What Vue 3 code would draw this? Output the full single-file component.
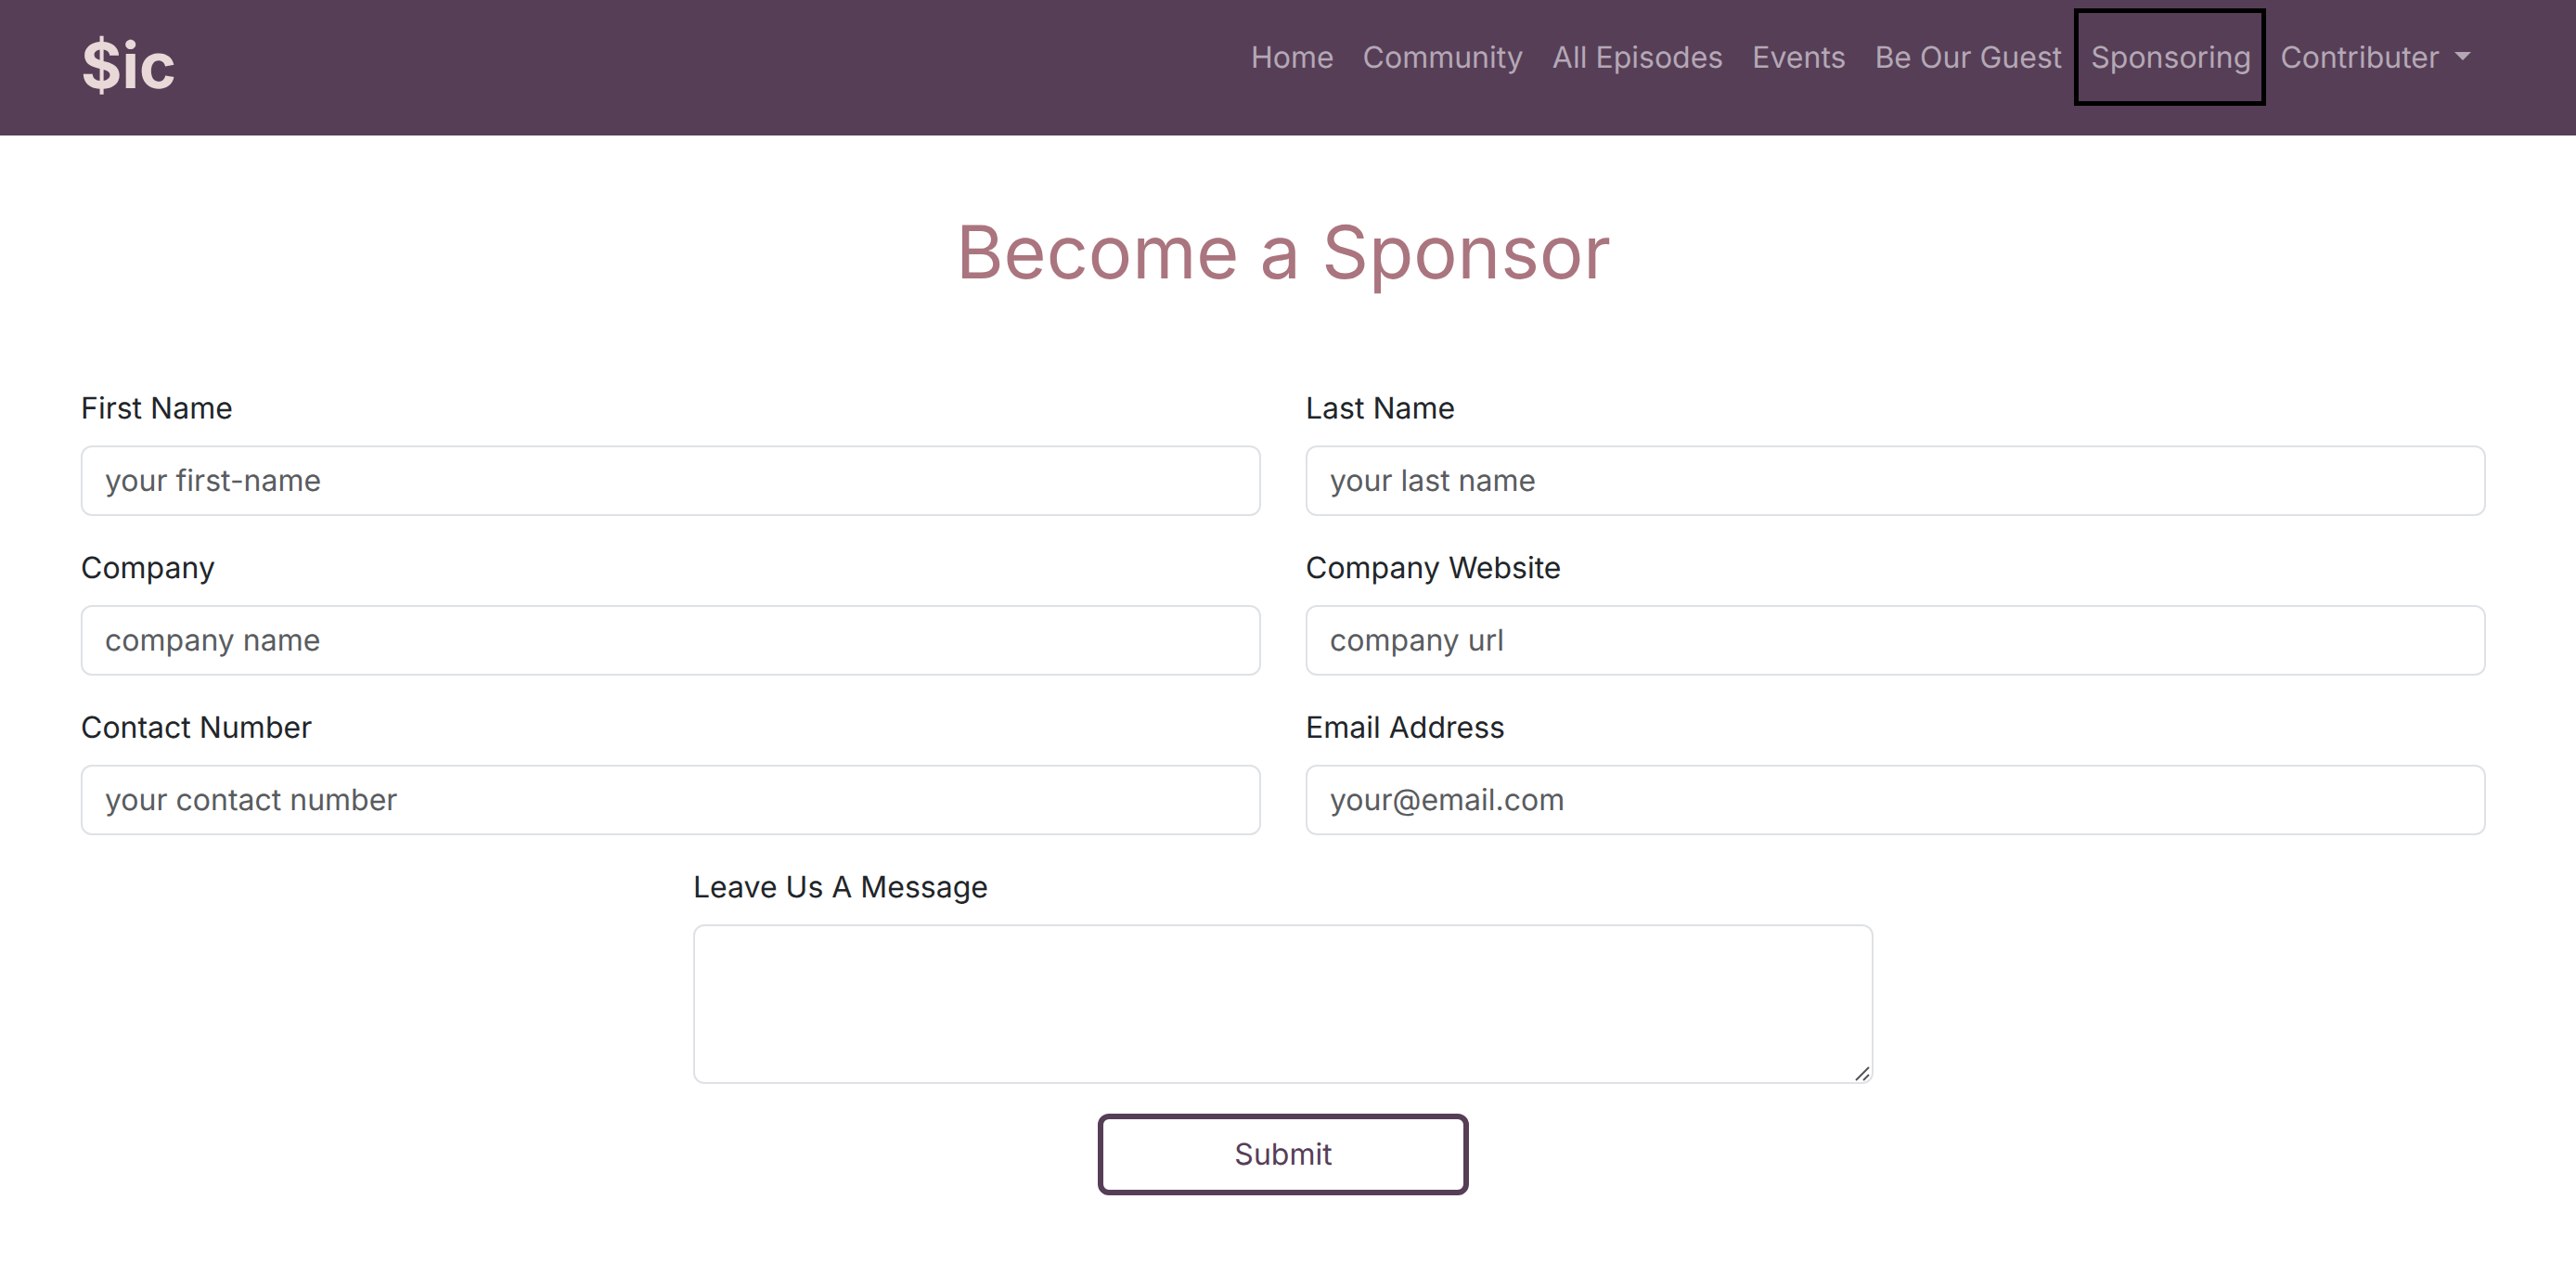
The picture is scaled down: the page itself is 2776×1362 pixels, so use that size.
<script setup>
import { reactive } from 'vue'

const links = [
  { label: 'Home', href: '#home' },
  { label: 'Community', href: '#community' },
  { label: 'All Episodes', href: '#episodes' },
  { label: 'Events', href: '#events' },
  { label: 'Be Our Guest', href: '#guest' },
  { label: 'Sponsoring', href: '#sponsoring', current: true },
  { label: 'Contributer', href: '#contributer', menu: true },
]

const fields = [
  { id: 'first-name', label: 'First Name', type: 'text', placeholder: 'your first-name' },
  { id: 'last-name', label: 'Last Name', type: 'text', placeholder: 'your last name' },
  { id: 'company', label: 'Company', type: 'text', placeholder: 'company name' },
  { id: 'website', label: 'Company Website', type: 'text', placeholder: 'company url' },
  { id: 'phone', label: 'Contact Number', type: 'tel', placeholder: 'your contact number' },
  { id: 'email', label: 'Email Address', type: 'email', placeholder: 'your@email.com' },
]

const form = reactive({ message: '' })
</script>

<template>
  <div class="page">
    <header class="navbar">
      <a class="brand" href="#home">$ic</a>
      <nav class="links" aria-label="Main">
        <a
          v-for="link in links"
          :key="link.label"
          class="link"
          :class="{ current: link.current, menu: link.menu }"
          :href="link.href"
        >{{ link.label }}</a>
      </nav>
    </header>

    <main class="content">
      <h1 class="title">Become a Sponsor</h1>
      <form class="form" @submit.prevent>
        <div class="grid">
          <div v-for="field in fields" :key="field.id" class="field">
            <label class="label" :for="field.id">{{ field.label }}</label>
            <input
              :id="field.id"
              v-model="form[field.id]"
              class="control"
              :type="field.type"
              :placeholder="field.placeholder"
            >
          </div>
        </div>
        <div class="field message">
          <label class="label" for="message">Leave Us A Message</label>
          <div class="area">
            <textarea id="message" v-model="form.message" class="control" rows="3"></textarea>
            <svg class="grip" viewBox="0 0 18 18" aria-hidden="true">
              <path d="M2 16 16 2M10 16l6-6" />
            </svg>
          </div>
        </div>
        <button class="submit" type="submit">Submit</button>
      </form>
    </main>
  </div>
</template>

<style>
body {
  margin: 0;
  background: #fff;
}
</style>

<style scoped>
.page {
  font-family: Inter, "Liberation Sans", sans-serif;
  font-size: 32px;
  font-optical-sizing: none;
  line-height: 48px;
  text-rendering: geometricPrecision;
  color: #212529;
}

.navbar {
  display: flex;
  justify-content: space-between;
  align-items: flex-start;
  box-sizing: border-box;
  min-height: 146px;
  padding: 22px 97px 20px 87px;
  background: #563e57;
}

.brand {
  font-size: 68px;
  font-weight: 700;
  line-height: 98px;
  color: #e8d8d8;
  text-decoration: none;
}

.links {
  display: flex;
}

.link {
  position: relative;
  padding: 16px 16px 16px 15px;
  color: #b4a8b5;
  text-decoration: none;
  white-space: nowrap;
}

.current::after {
  content: "";
  position: absolute;
  inset: -13px 0 -12px -3px;
  border: 5px solid #000;
}

.menu::after {
  content: "";
  display: inline-block;
  margin-left: 16px;
  vertical-align: 8px;
  border-top: 9px solid;
  border-right: 9px solid transparent;
  border-left: 9px solid transparent;
}

.content {
  padding: 78px 97px 72px 87px;
}

.title {
  margin: 0 0 96px;
  font-size: 79px;
  font-weight: 400;
  line-height: 96px;
  text-align: center;
  color: #aa757f;
}

.form {
  display: flex;
  flex-direction: column;
  align-items: center;
  gap: 32px;
}

.grid {
  display: grid;
  grid-template-columns: 1fr 1fr;
  gap: 32px 48px;
  width: 100%;
}

.field {
  display: flex;
  flex-direction: column;
  gap: 16px;
}

.message {
  width: calc(50% - 24px);
}

.control {
  display: block;
  box-sizing: border-box;
  width: 100%;
  margin: 0;
  padding: 12px 24px;
  border: 2px solid #dee2e6;
  border-radius: 12px;
  background: #fff;
  font: inherit;
  font-optical-sizing: none;
  line-height: 48px;
  text-rendering: inherit;
  color: #212529;
}

input.control {
  height: 76px;
  padding: 11px 24px 13px;
}

.control::placeholder {
  color: #595c5f;
  opacity: 1;
}

.area {
  position: relative;
}

textarea.control {
  resize: none;
}

.grip {
  position: absolute;
  right: 3px;
  bottom: 2px;
  width: 18px;
  height: 18px;
  pointer-events: none;
  fill: none;
  stroke: #555;
  stroke-width: 2;
}

.submit {
  width: 400px;
  padding: 14px 24px;
  border: 6px solid #563e57;
  border-radius: 12px;
  background: #fff;
  font: inherit;
  font-optical-sizing: none;
  text-rendering: inherit;
  color: #563e57;
}
</style>
